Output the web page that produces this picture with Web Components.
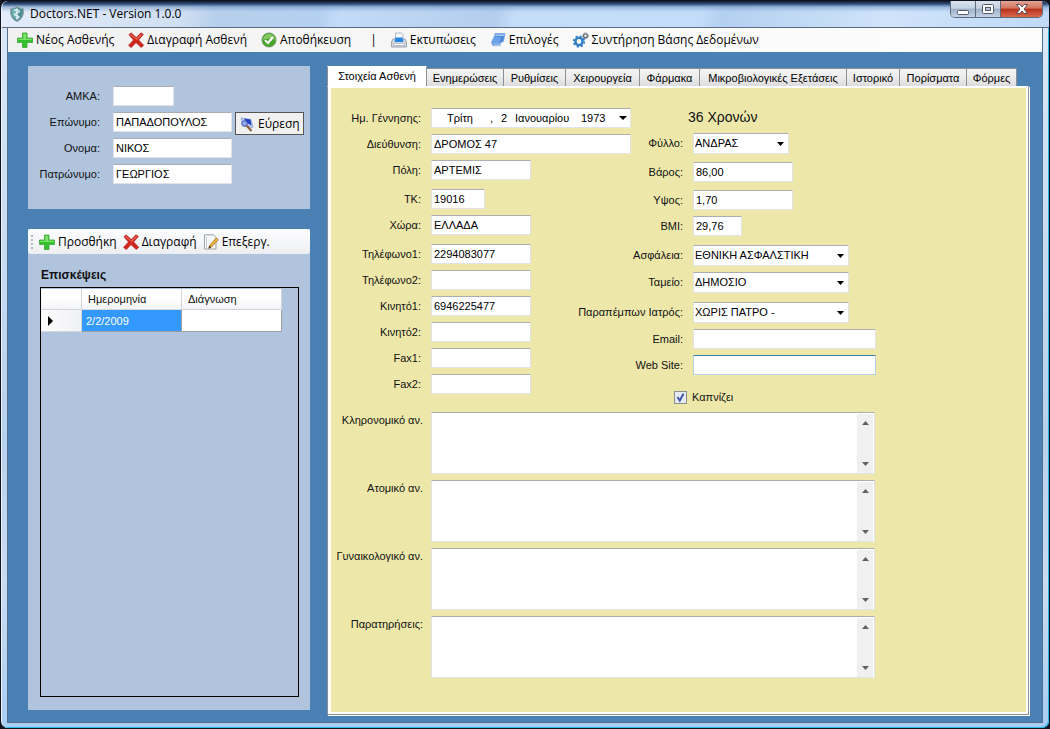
<!DOCTYPE html>
<html lang="el">
<head>
<meta charset="utf-8">
<meta name="viewport" content="width=device-width, initial-scale=1">
<title>Doctors.NET - Version 1.0.0</title>
<style>
  :root {
    --ui: "Open Sans", "Noto Sans", sans-serif;
    --form: "Liberation Sans", Arial, sans-serif;
    --steel: #4a80b4;
    --panel: #b0c4de;
    --page: #ede8aa;
  }
  body { margin: 0; background: #11141c; font: 11px/14px var(--form); color: #111; }
</style>
</head>
<body>
<doctors-app></doctors-app>

<script>
const define = (name, html, setup) => {
  const template = document.createElement('template');
  template.innerHTML = html;
  customElements.define(name, class extends HTMLElement {
    constructor() {
      super();
      this.attachShadow({ mode: 'open' }).append(template.content.cloneNode(true));
    }
    connectedCallback() { if (setup && !this.ready) { this.ready = true; setup(this, this.shadowRoot); } }
  });
};

/* ---------- icons ---------- */
const ICONS = {
  shield: `<path d="M8 0.5 C6 2 3.5 2.5 1.5 2.5 C1 9 3 13.5 8 15.5 C13 13.5 15 9 14.5 2.5 C12.5 2.5 10 2 8 .5Z" fill="#4d8f98" stroke="#9aa6ac"/><path d="M8 1.8 C6.500 3 4.500 3.500 2.800 3.600 C2.600 8.500 4 12 8 14Z" fill="#74b3b4"/><path d="M8 2.500v11" stroke="#f2fbfb" stroke-width="1.200"/><path d="M5 4.500c2-1.200 5.500-.5 5.500 1S5.500 7 5.500 8.500s4.500 1 4.500 2.300-1.500 1.200-2.500 1.200" fill="none" stroke="#f2fbfb" stroke-width="1.200"/>`,
  plus: `<path d="M5.500 1h4.500v5h5.500v4.500H10V15.500H5.500V10.500H.5V6h5z" fill="#35c02c" stroke="#3aa634" stroke-width=".8"/><path d="M6.300 1.800h2.900v5h5.500v1.200H1.300V6.800h5z" fill="#7be36b"/>`,
  cross: `<path d="M1 2.800 3 .8 8.200 5.600 13 .8l2.300 1.700L10.600 8l5 5.200-2.300 2.300L8 10.600l-4.800 5L.6 13.300 5.500 8z" fill="#d3241d" stroke="#a81713" stroke-width=".7"/><path d="M2 2.900 3 1.900 8.200 6.800 13 1.900l1 .8L8.800 8z" fill="#ef6a5d"/>`,
  check: `<circle cx="8" cy="8" r="7" fill="#49a32c" stroke="#6f9a62"/><path d="M2 8a6 6 0 0 1 12 0c-3-2-8-2-12 0z" fill="#86cc63"/><path d="M4 8.200 7 11l5-6" fill="none" stroke="#fff" stroke-width="2.200"/>`,
  printer: `<path d="M4.500 1h6L12 2.500V8H4.500z" fill="#f3f6fa" stroke="#a3a9b4" stroke-width=".8"/><path d="M2 7h12l1.500 3v5H.5v-5z" fill="#d5d9e1" stroke="#8b909c" stroke-width=".8"/><path d="M4.500 5.500h7L12.500 10h-9z" fill="#2487e4"/><path d="M2.500 11.500h11v2h-11z" fill="#fff" stroke="#9aa0aa" stroke-width=".6"/>`,
  options: `<path d="M5 1.500h10L13.500 9.500 11 10.500 10 13.500H2.500L1.500 9.500 3.500 8z" fill="#4d87d8" stroke="#87a9df" stroke-width=".8"/><path d="M5.500 2.500h8.500v1.500H5z" fill="#a9cbf7"/><path d="M2.500 7l1.500-2h7L9.500 11H2.500z" fill="#6ca2ea"/><path d="M3 12h8M4.500 14h7" stroke="#c6d8f2"/>`,
  gears: `<circle cx="6" cy="9.500" r="3.600" fill="none" stroke="#2d7cc4" stroke-width="2.400"/><circle cx="6" cy="9.500" r="5.300" fill="none" stroke="#2d7cc4" stroke-width="1.700" stroke-dasharray="2.100 2.060"/><circle cx="12.500" cy="3.800" r="1.900" fill="none" stroke="#6d7278" stroke-width="1.400"/><circle cx="12.500" cy="3.800" r="2.900" fill="none" stroke="#6d7278" stroke-width="1" stroke-dasharray="1.200 1.070"/>`,
  edit: `<path d="M1.500 .8H10.500L13 3.500V15H1.500z" fill="#f6f7f8" stroke="#9da1a6"/><path d="M3.500 3v11" stroke="#c9ccd0"/><path d="M13.200 4 15.300 5.800 8.500 13 5.800 14.300 6.500 11.500z" fill="#f2b235" stroke="#a5712a" stroke-width=".8"/><path d="M6.500 11.800 5.600 14.500 8.300 13.300z" fill="#333"/>`,
  search: `<path d="M2 2 12 3.500l2 8L4 10z" fill="#b9cdf0" stroke="#8099cc" stroke-width=".7"/><path d="M5 2.500 11.500 3.500l1 6L8 7z" fill="#2440c0"/><circle cx="5.500" cy="7.500" r="2.800" fill="#8fa6ea" stroke="#4059b5"/><path d="M7.500 9.500 12.500 15" stroke="#8a5a3c" stroke-width="2"/>`
};
define('app-icon', `
  <style>:host{display:block;width:16px;height:16px;flex:none} svg{display:block}</style>
  <svg width="16" height="16" viewBox="0 0 16 16" aria-hidden="true"></svg>`,
  (el, root) => { root.querySelector('svg').innerHTML = ICONS[el.getAttribute('name')]; });

/* ---------- title bar ---------- */
define('title-bar', `
  <style>
    :host{display:flex;align-items:center;height:26px;padding:0 6px 0 7px;gap:5px;border-bottom:1px solid #5b6b7d;
      font:12px/16px var(--ui);color:#000;
      background:linear-gradient(180deg,#0d1830 0,#31507c 3px,rgba(120,155,200,.6) 6px,rgba(190,215,245,0) 11px),
      linear-gradient(105deg,#e3edfa 0,#cfdef2 180px,#b7cfec 210px,#b4d0f0 310px,#c3dbf8 330px,#b4cdec 480px,#c5ddf9 500px,#c2dcf9 680px,#b4d0f0 700px,#cfe3fa 860px,#c0daf7)}
    h1{margin:0;flex:1;font:inherit}
    .buttons{display:flex;align-self:flex-start;border:1px solid #5f6c80;border-top:0;border-radius:0 0 5px 5px;overflow:hidden}
    button{display:grid;place-items:center;width:25px;height:16px;padding:0;border:0;border-right:1px solid #5f6c80;
      background:linear-gradient(#d8e2ef 0,#c6d2e2 45%,#9fb0c6 50%,#c4d3e6)}
    button:last-child{width:41px;border-right:0;background:linear-gradient(#e3a393 0,#d37460 45%,#b8301a 50%,#d9694c)}
  </style>
  <app-icon name="shield"></app-icon>
  <h1>Doctors.NET - Version 1.0.0</h1>
  <div class="buttons">
    <button aria-label="Ελαχιστοποίηση"><svg width="14" height="12"><rect x="1.500" y="7.500" width="11" height="4" rx="1" fill="#fff" stroke="#555c69"/></svg></button>
    <button aria-label="Μεγιστοποίηση"><svg width="14" height="12"><rect x="1.500" y="1.500" width="11" height="9" rx="1" fill="#fff" stroke="#555c69"/><rect x="4.500" y="4.500" width="5" height="3" fill="#b8c6d8" stroke="#555c69"/></svg></button>
    <button aria-label="Κλείσιμο"><svg width="14" height="12"><path d="M1.500 1.500h3.500L7 4l2-2.500h3.500L9 6l3.500 4.500H9L7 8l-2 2.500H1.500L5 6z" fill="#fff" stroke="#5f4a52"/></svg></button>
  </div>`);

/* ---------- tool strip ---------- */
define('tool-button', `
  <style>
    :host{display:block}
    button{display:flex;align-items:center;gap:3px;padding:0;border:0;background:none;font:12px/18px var(--ui);color:#000;white-space:nowrap}
  </style>
  <button><app-icon></app-icon><span><slot></slot></span></button>`,
  (el, root) => {
    const icon = document.createElement('app-icon');
    icon.setAttribute('name', el.getAttribute('icon'));
    root.querySelector('app-icon').replaceWith(icon);
  });
define('main-toolbar', `
  <style>
    :host{display:flex;align-items:center;gap:14px;height:24px;padding-left:9px;
      background:linear-gradient(90deg,#f1f1f2,#fafafb 60%,#fdfdfd);font:12px/18px var(--ui);color:#000}
    .bar{padding-left:5px}
  </style>
  <tool-button icon="plus">Νέος Ασθενής</tool-button>
  <tool-button icon="cross">Διαγραφή Ασθενή</tool-button>
  <tool-button icon="check">Αποθήκευση</tool-button>
  <span class="bar">|</span>
  <tool-button icon="printer">Εκτυπώσεις</tool-button>
  <tool-button icon="options">Επιλογές</tool-button>
  <tool-button icon="gears">Συντήρηση Βάσης Δεδομένων</tool-button>`);

/* ---------- form controls ---------- */
const BOX = `
  box-sizing:border-box;border:1px solid #e2e3ea;border-top-color:#abadb3;border-radius:1px;background:#fff;
  font:11px/14px var(--form);color:#000;outline:0;margin:0;`;
const LABEL = `
  label,.label{flex:none;display:flex;justify-content:flex-end;width:var(--label,90px);white-space:nowrap;line-height:20px}`;

define('text-field', `
  <style>
    :host{display:flex;gap:var(--label-gap,10px);height:20px}
    ${LABEL}
    input{${BOX}width:var(--w,100px);height:20px;padding:0 2px 1px}
    :host([active]) input{border-color:#b5cfe7;border-top-color:#3d7bad}
  </style>
  <label for="f"></label><input id="f" type="text"><slot></slot>`,
  (el, root) => {
    root.querySelector('label').textContent = el.getAttribute('label') + ':';
    root.querySelector('input').value = el.getAttribute('value') || '';
  });

define('select-field', `
  <style>
    :host{display:flex;gap:10px;height:21px}
    ${LABEL}
    select{${BOX}appearance:none;width:var(--w,156px);height:21px;padding:0 20px 2px 1px;
      background:#fff url("data:image/svg+xml,%3Csvg xmlns='http://www.w3.org/2000/svg' width='7' height='4'%3E%3Cpath d='M0 0h7L3.500 4z'/%3E%3C/svg%3E") no-repeat right 4px center}
  </style>
  <label for="f"></label><select id="f"><option></option></select>`,
  (el, root) => {
    root.querySelector('label').textContent = el.getAttribute('label') + ':';
    root.querySelector('option').textContent = el.getAttribute('value');
  });

define('date-field', `
  <style>
    :host{display:flex;gap:10px;height:20px}
    ${LABEL}
    .box{${BOX}display:flex;align-items:center;width:200px;height:20px;padding-left:15px}
    .weekday{width:43px}
    .comma{width:10px}
    input{box-sizing:border-box;padding:0;border:0;background:none;outline:0;font:inherit;color:inherit}
    .d{width:15px;padding-left:1px} .m{width:66px} .y{width:34px}
    button{display:grid;place-items:center;width:14px;height:18px;margin-left:auto;padding:0;border:0;background:none}
  </style>
  <label for="d">Ημ. Γέννησης:</label>
  <div class="box">
    <span class="weekday">Τρίτη</span><span class="comma">,</span>
    <input class="d" id="d" value="2"><input class="m" aria-label="Μήνας" value="Ιανουαρίου"><input class="y" aria-label="Έτος" value="1973">
    <button aria-label="Ημερολόγιο"><svg width="8" height="4"><path d="M0 0h8L4 4z"/></svg></button>
  </div>`);

define('memo-field', `
  <style>
    :host{display:flex;gap:8px}
    label{flex:none;display:flex;justify-content:flex-end;width:92px;white-space:nowrap;line-height:16px}
    .box{${BOX}flex:1;display:flex;height:62px;padding-right:1px}
    textarea{flex:1;min-width:0;padding:2px;border:0;outline:0;resize:none;background:none;font:inherit;overflow:hidden}
    .scroll{display:flex;flex-direction:column;justify-content:space-between;width:16px;margin-top:1px;background:#f0f0f0}
    button{display:grid;place-items:center;height:18px;padding:0;border:0;background:none}
  </style>
  <label for="f"></label>
  <div class="box"><textarea id="f"></textarea>
    <div class="scroll">
      <button aria-label="Πάνω"><svg width="7" height="4"><path d="M3.500 0 7 4H0z" fill="#606060"/></svg></button>
      <button aria-label="Κάτω"><svg width="7" height="4"><path d="M0 0h7L3.500 4z" fill="#606060"/></svg></button>
    </div>
  </div>`,
  (el, root) => { root.querySelector('label').textContent = el.getAttribute('label'); });

define('check-field', `
  <style>
    :host{display:block}
    label{display:flex;align-items:center;gap:5px;line-height:16px}
    input{appearance:none;box-sizing:border-box;margin:0;width:13px;height:13px;border:1px solid #8e8f8f;
      background:#e6eaf2 url("data:image/svg+xml,%3Csvg xmlns='http://www.w3.org/2000/svg' width='11' height='11'%3E%3Cpath d='M2.500 5 4.800 8.500 8.500 1.800' fill='none' stroke='%234257a8' stroke-width='2'/%3E%3C/svg%3E") center no-repeat}
    input:not(:checked){background-image:none}
  </style>
  <label><input type="checkbox" checked><slot></slot></label>`);

/* ---------- patient search ---------- */
define('patient-panel', `
  <style>
    :host{display:flex;flex-direction:column;gap:6px;padding:20px 0 25px;background:var(--panel);--label:72px;--label-gap:13px;--w:119px}
    .short{--w:61px}
    button{display:flex;align-items:center;gap:3px;width:69px;height:23px;margin-left:-10px;padding:0 0 0 3px;border:1px solid #555;
      background:#f0f0f0;font:12px/16px var(--ui);color:#000;white-space:nowrap}
  </style>
  <text-field class="short" label="ΑΜΚΑ"></text-field>
  <text-field label="Επώνυμο" value="ΠΑΠΑΔΟΠΟΥΛΟΣ"><button><app-icon name="search"></app-icon>Εύρεση</button></text-field>
  <text-field label="Ονομα" value="ΝΙΚΟΣ"></text-field>
  <text-field label="Πατρώνυμο" value="ΓΕΩΡΓΙΟΣ"></text-field>`);

/* ---------- visits ---------- */
define('visits-panel', `
  <style>
    :host{display:flex;flex-direction:column;background:var(--panel)}
    .strip{display:flex;align-items:center;gap:6px;height:25px;padding-left:3px;border-radius:3px;
      background:linear-gradient(#fdfdfe,#f4f5f8 60%,#eceef3)}
    .grip{width:2px;height:14px;background:repeating-linear-gradient(#b4b8c0 0 2px,transparent 2px 4px)}
    h2{margin:13px 13px 4px;font:bold 12px/16px var(--form)}
    .grid{flex:1;margin:0 11px 13px 12px;border:1px solid #000}
    table{border-collapse:separate;border-spacing:0;table-layout:fixed;width:241px;margin-top:1px}
    th,td{box-sizing:border-box;height:22px;padding:0 4px;border-right:1px solid #a0a0a0;border-bottom:1px solid #a0a0a0;font-weight:normal;text-align:left;background:#fff}
    thead th{height:21px;padding-left:6px;border-color:#d5d5dc;background:linear-gradient(#fff 50%,#f3f4f7)}
    tbody th{padding-left:7px;border-color:#d5d5dc;background:linear-gradient(90deg,#fdfdfd,#f0f1f5)}
    tbody th svg{display:block}
    .r{width:41px}.c{width:100px}
    .sel{background:#3399ff;color:#fff}
  </style>
  <div class="strip"><span class="grip"></span>
    <tool-button icon="plus">Προσθήκη</tool-button>
    <tool-button icon="cross">Διαγραφή</tool-button>
    <tool-button icon="edit">Επεξεργ.</tool-button>
  </div>
  <h2>Επισκέψεις</h2>
  <div class="grid">
    <table>
      <colgroup><col class="r"><col class="c"><col class="c"></colgroup>
      <thead><tr><th></th><th scope="col">Ημερομηνία</th><th scope="col">Διάγνωση</th></tr></thead>
      <tbody><tr><th scope="row"><svg width="5" height="10"><path d="M0 0v10L5 5z"/></svg></th><td class="sel">2/2/2009</td><td></td></tr></tbody>
    </table>
  </div>`);

/* ---------- patient details ---------- */
define('details-form', `
  <style>
    :host{display:block;padding:20px 0 30px}
    .columns{display:flex;gap:10px}
    .col{display:flex;flex-direction:column;gap:6px}
    .right{--label:42px}
    .left{width:300px}
    .mid{margin-top:2px}
    .loose{margin-top:3px}
    .xl{--w:200px}.l{--w:183px}.s{--w:54px}.xs{--w:49px}.combo{--w:96px}
    output{font:14px/18px var(--form);padding-left:47px;margin-bottom:1px}
    check-field{margin:8px 0 0 33px}
    .memos{display:flex;flex-direction:column;gap:6px;width:544px;margin-top:7px}
  </style>
  <div class="columns">
    <div class="col left">
      <date-field></date-field>
      <text-field class="xl" label="Διεύθυνση" value="ΔΡΟΜΟΣ 47"></text-field>
      <text-field label="Πόλη" value="ΑΡΤΕΜΙΣ"></text-field>
      <text-field class="s loose" label="ΤΚ" value="19016"></text-field>
      <text-field label="Χώρα" value="ΕΛΛΑΔΑ"></text-field>
      <text-field class="loose" label="Τηλέφωνο1" value="2294083077"></text-field>
      <text-field label="Τηλέφωνο2"></text-field>
      <text-field label="Κινητό1" value="6946225477"></text-field>
      <text-field label="Κινητό2"></text-field>
      <text-field label="Fax1"></text-field>
      <text-field label="Fax2"></text-field>
    </div>
    <div class="col right">
      <output>36 Χρονών</output>
      <select-field class="combo" label="Φύλλο" value="ΑΝΔΡΑΣ"></select-field>
      <text-field class="mid" label="Βάρος" value="86,00"></text-field>
      <text-field class="mid" label="Υψος" value="1,70"></text-field>
      <text-field class="xs" label="BMI" value="29,76"></text-field>
      <select-field class="loose" label="Ασφάλεια" value="ΕΘΝΙΚΗ ΑΣΦΑΛΣΤΙΚΗ"></select-field>
      <select-field label="Ταμείο" value="ΔΗΜΟΣΙΟ"></select-field>
      <select-field class="loose" label="Παραπέμπων Ιατρός" value="ΧΩΡΙΣ ΠΑΤΡΟ -"></select-field>
      <text-field class="l" label="Email"></text-field>
      <text-field class="l" label="Web Site" active></text-field>
      <check-field>Καπνίζει</check-field>
    </div>
  </div>
  <div class="memos">
    <memo-field label="Κληρονομικό αν."></memo-field>
    <memo-field label="Ατομικό αν."></memo-field>
    <memo-field label="Γυναικολογικό αν."></memo-field>
    <memo-field label="Παρατηρήσεις:"></memo-field>
  </div>`);

define('tab-pages', `
  <style>
    :host{display:flex;flex-direction:column;min-width:0}
    .tabs{display:grid;grid-template-columns:100px 77px 62px 74px 60px 147px 53px 67px 50px;align-items:end;height:20px}
    button{box-sizing:border-box;height:18px;padding:0;border:1px solid #8c8f98;border-width:1px 1px 0 0;
      background:linear-gradient(#f4f4f4,#ececec 50%,#dcdcde);font:11px/14px var(--form);color:#000;white-space:nowrap;text-align:center}
    button[aria-selected=true]{height:20px;padding-bottom:2px;border-color:#fff #8c8f98 #fff #8c8f98;border-left-width:1px;background:#fff}
    .page{flex:1;border:solid #fff;border-width:1px 2px 2px 3px;background:var(--page)}
    .frame{flex:1;display:flex;border:1px solid #8c8f98;border-top-color:#fff;box-shadow:1px 1px 0 #fff}
  </style>
  <div class="tabs" role="tablist">
    <button role="tab" aria-selected="true">Στοιχεία Ασθενή</button>
    <button role="tab">Ενημερώσεις</button>
    <button role="tab">Ρυθμίσεις</button>
    <button role="tab">Χειρουργεία</button>
    <button role="tab">Φάρμακα</button>
    <button role="tab">Μικροβιολογικές Εξετάσεις</button>
    <button role="tab">Ιστορικό</button>
    <button role="tab">Πορίσματα</button>
    <button role="tab">Φόρμες</button>
  </div>
  <div class="frame"><div class="page" role="tabpanel"><slot></slot></div></div>`);

/* ---------- window ---------- */
define('doctors-app', `
  <style>
    :host{display:flex;flex-direction:column;box-sizing:border-box;min-height:calc(100vh - 2px);overflow:hidden;
      border:solid #e9f3fd;border-width:0 0 0 1px;border-radius:7px;
      box-shadow:inset -1px -1px 0 #25b7e6;margin:1px 1px 0;
      background:linear-gradient(180deg,#dce9f8,#c4d9f0 40%,#b7d0ee 60%,#cbdcf1 80%,#a9cdf2)}
    .client{flex:1;display:flex;flex-direction:column;margin:0 6px 5px 5px;border:1px solid #52718f;border-top:0;background:var(--steel)}
    main{flex:1;display:grid;grid-template-columns:282px minmax(0,1fr);gap:17px;padding:14px 13px 7px 20px}
    .side{display:flex;flex-direction:column;gap:20px;padding-bottom:5px}
    visits-panel{flex:1}
  </style>
  <title-bar></title-bar>
  <div class="client">
    <main-toolbar></main-toolbar>
    <main>
      <div class="side"><patient-panel></patient-panel><visits-panel></visits-panel></div>
      <tab-pages><details-form></details-form></tab-pages>
    </main>
  </div>`);
</script>
</body>
</html>
